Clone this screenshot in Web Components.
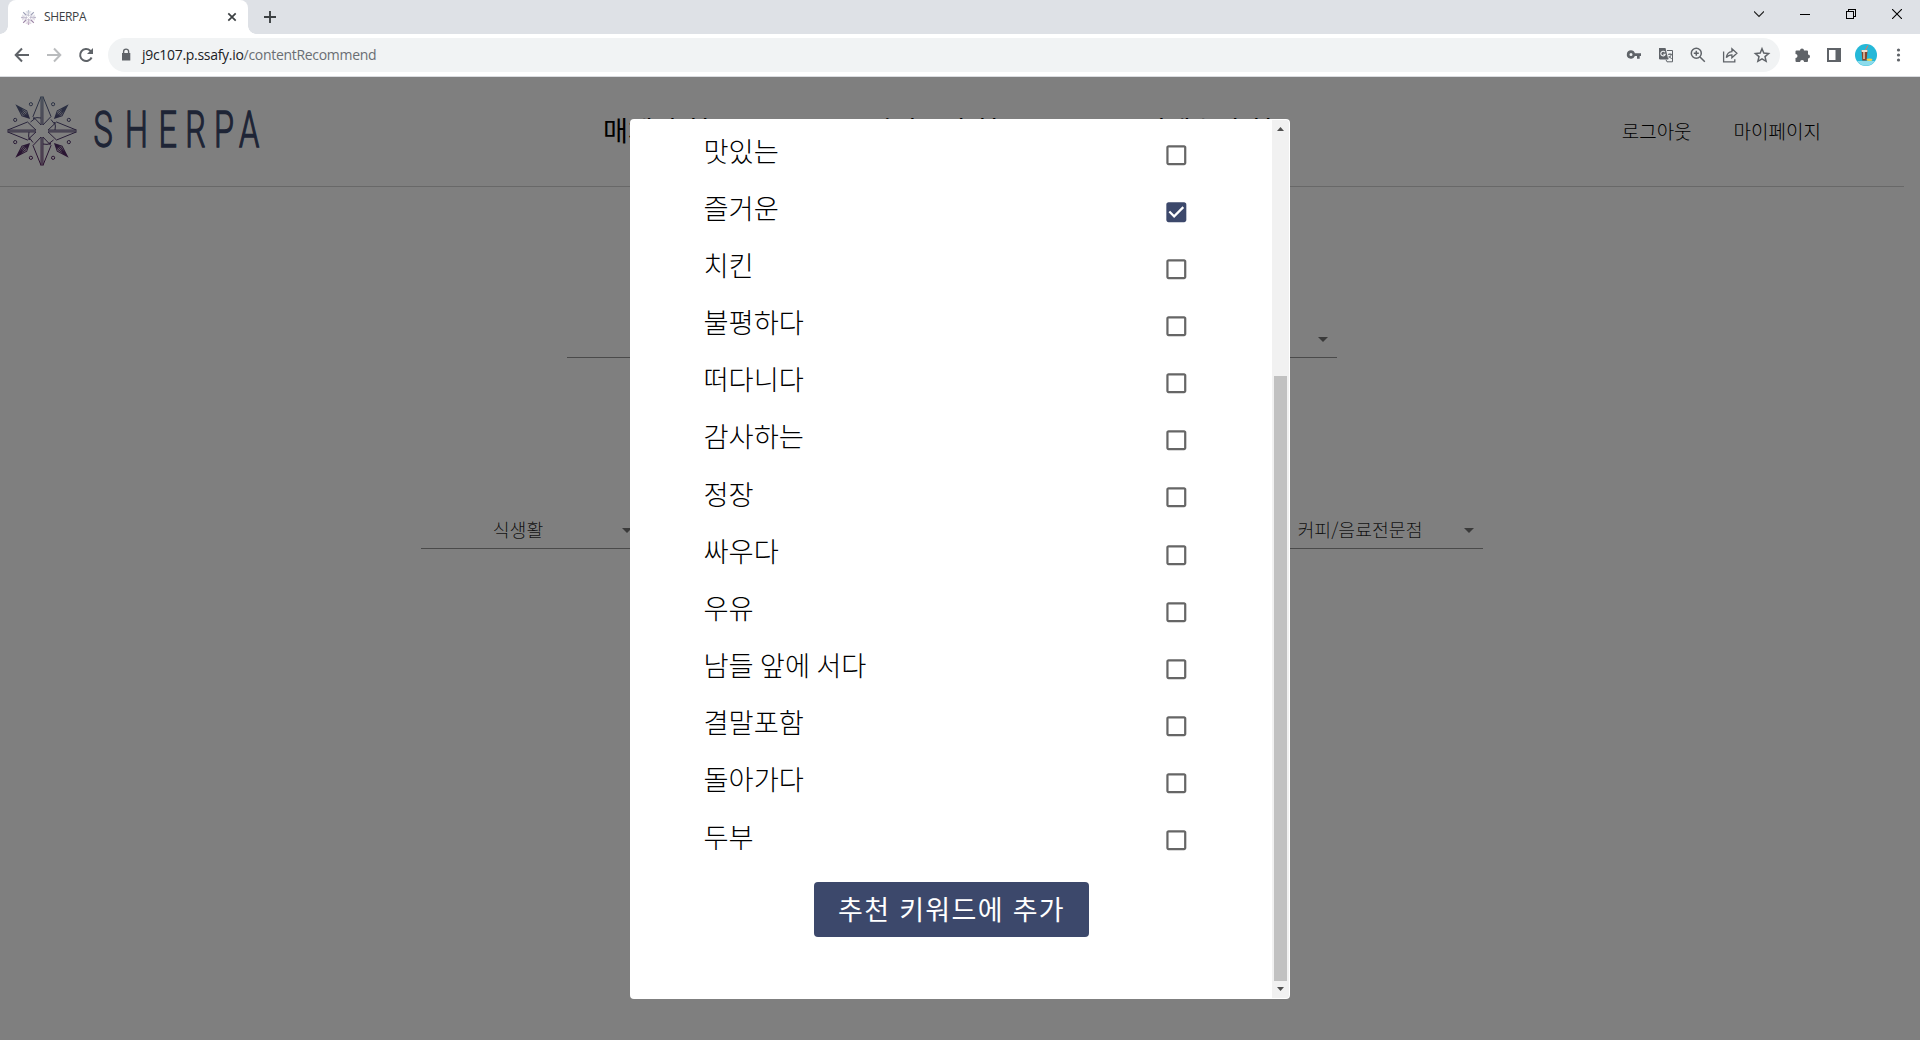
<!DOCTYPE html>
<html lang="ko">
<head>
<meta charset="utf-8">
<title>SHERPA</title>
<style>
html,body{margin:0;height:100%;overflow:hidden;background:#fff}
body{font-family:"Noto Sans CJK KR","Noto Sans",sans-serif;font-weight:300;color:#000}
</style>
</head>
<body>
<browser-window></browser-window>
<script>
const define = (name, html, setup) => {
  const t = document.createElement('template');
  t.innerHTML = html;
  customElements.define(name, class extends HTMLElement {
    constructor() {
      super();
      this.attachShadow({mode: 'open'}).appendChild(t.content.cloneNode(true));
    }
    connectedCallback() { if (setup) setup(this, this.shadowRoot); }
  });
};

/* Compass star: four blades, four diagonal seeds, eight dots */
const blade = a => `<g transform="rotate(${a})"><path d="M-.9-34.5-9-14.5-.9-6ZM.9-34.5 9-14.5.9-6Z"/></g>`;
const seed = a => `<g transform="rotate(${a})"><path d="M0-36 3.4-25 0-18-3.4-25ZM0-36V-18M0-34-1.700-25 0-19 1.700-25Z"/></g>`;
const dots = [22.5,67.5,112.5,157.5,202.5,247.5,292.5,337.5].map(a => {
  const r = a * Math.PI / 180;
  return `<circle cx="${(29*Math.cos(r)).toFixed(1)}" cy="${(29*Math.sin(r)).toFixed(1)}" r="1.6"/>`;
}).join('');
define('star-mark', `<style>:host{display:block}svg{display:block;width:100%;height:100%}</style>
<svg viewBox="-36 -36 72 72"><defs><linearGradient id="g" gradientUnits="userSpaceOnUse" x1="0" y1="-36" x2="0" y2="36"><stop offset="0" stop-color="#5a7090"/><stop offset=".5" stop-color="#4e3f70"/><stop offset="1" stop-color="#571b5c"/></linearGradient></defs>
<mask id="m" maskUnits="userSpaceOnUse" x="-36" y="-36" width="72" height="72"><g fill="none" stroke="#fff" stroke-width="1">${[0,90,180,270].map(blade).join('')}${[45,135,225,315].map(seed).join('')}${dots}<path d="M-9-12.500Q-5-14-1-13M12.500-9Q14-5 13-1M9 12.500Q5 14 1 13M-12.500 9Q-14 5-13 1M-11.500-9-7-12.500M9-11.500 12.500-7M11.500 9 7 12.500M-9 11.500-12.500 7"/></g></mask>
<rect x="-36" y="-36" width="72" height="72" fill="url(#g)" mask="url(#m)"/></svg>`);

define('tab-strip', `<style>
:host{display:flex;height:34px;background:#dee1e6;align-items:stretch;font-family:"Open Sans",sans-serif;font-weight:400}
.tab{margin-left:8px;width:240px;box-sizing:border-box;background:#fff;border-radius:8px 8px 0 0;display:flex;align-items:center;padding:0 10px 0 13px;position:relative}
.tab:before,.tab:after{content:"";position:absolute;bottom:0;width:8px;height:8px}
.tab:before{left:-8px;background:radial-gradient(circle at 0 0,transparent 7.5px,#fff 8px)}
.tab:after{right:-8px;background:radial-gradient(circle at 100% 0,transparent 7.5px,#fff 8px)}
star-mark{width:15px;height:15px}
span{font-size:12px;letter-spacing:-.35px;color:#3c4043;margin-left:8px;flex:1;line-height:16px}
.plus{margin:10px 0 0 15px;width:14px;height:14px}
.win{margin-left:auto;display:flex;align-items:center;padding:0 18px 6px 0;gap:36px}
svg{display:block}
</style>
<div class="tab"><star-mark></star-mark><span>SHERPA</span><svg width="12" height="12" viewBox="0 0 12 12" stroke="#3c4043" stroke-width="1.7"><path d="m2.3 2.3 7.4 7.4m0-7.4-7.4 7.4"/></svg></div>
<svg class="plus" viewBox="0 0 14 14" stroke="#3c4043" stroke-width="1.9"><path d="M7 1v12M1 7h12"/></svg>
<div class="win">
<svg width="10" height="10" viewBox="0 0 10 10" fill="none" stroke="#222" stroke-width="1.200"><path d="m0 2.3 5 5 5-5"/></svg>
<svg width="10" height="10" viewBox="0 0 10 10" fill="none" stroke="#000" shape-rendering="crispEdges"><path d="M0 5.5h10"/></svg>
<svg width="10" height="10" viewBox="0 0 10 10" fill="none" stroke="#000" shape-rendering="crispEdges"><path d="M.5 2.5h7v7h-7zM2.5 2.5v-2h7v7h-2"/></svg>
<svg width="10" height="10" viewBox="0 0 10 10" fill="none" stroke="#000" stroke-width="1.1"><path d="m0 0 10 10M10 0 0 10"/></svg>
</div>`);

define('tool-bar', `<style>
:host{display:flex;height:43px;box-sizing:border-box;border-bottom:1px solid #dadce0;background:#fff;padding:4px 12px 4px 12px;align-items:center;font-family:"Open Sans",sans-serif;font-weight:400}
svg{display:block;width:20px;height:20px;flex:none}
.nav{display:flex;gap:12px;width:96px}
.field{flex:1;height:34px;border-radius:17px;background:#f1f3f4;display:flex;align-items:center;padding:0 8px 0 8px}
.url{font-size:14px;letter-spacing:-.3px;color:#202124;margin-left:6px;flex:1;line-height:20px}
.url i{font-style:normal;color:#6a6e73}
.acts{display:flex;gap:12px}
.ext{display:flex;gap:10px;align-items:center;margin-left:12px}
.ext .av{width:22px;height:22px;margin:0 1px}
.ext svg:nth-child(1){margin-right:2px}
</style>
<div class="nav">
<svg viewBox="0 0 20 20" fill="none" stroke="#5f6368" stroke-width="2"><path d="M17 10H4M10 3.5 3.7 10l6.3 6.5"/></svg>
<svg viewBox="0 0 20 20" fill="none" stroke="#babcbe" stroke-width="2"><path d="M3 10h13M10 3.5l6.3 6.5-6.3 6.5"/></svg>
<svg viewBox="0 0 20 20" fill="none" stroke="#5f6368" stroke-width="2"><path d="M15.6 12.5a6 6 0 1 1-1.3-6.8l1.5 1.6"/><path d="M17 3v6h-6z" fill="#5f6368" stroke="none"/></svg>
</div>
<div class="field">
<svg viewBox="0 0 20 20"><path d="M6 8h8.3v7.5H6z" fill="#5f6368"/><path d="M7.600 8.200V6.600a2.500 2.500 0 0 1 5 0v1.600" fill="none" stroke="#5f6368" stroke-width="1.4"/></svg>
<span class="url">j9c107.p.ssafy.io<i>/contentRecommend</i></span>
<div class="acts">
<svg viewBox="0 0 20 20"><path fill-rule="evenodd" fill="#5f6368" d="M7 5.300a4.200 4.200 0 1 0 3.900 5.800H13V13.800h2.700v-2.700H17V8.300h-6.100A4.200 4.200 0 0 0 7 5.300Zm0 2.800a1.500 1.500 0 1 1 0 3 1.500 1.500 0 0 1 0-3Z"/></svg>
<svg viewBox="0 0 20 20" fill="none" stroke="#5f6368"><path d="M3 3h6.500l2.800 11.500H4.200A1.200 1.200 0 0 1 3 13.300Z" fill="#5f6368" stroke="none"/><path d="M9 7.300A2.300 2.300 0 1 0 9.300 9.200H7.200" stroke="#f1f3f4" stroke-width="1.1"/><path d="M11 5.500h5.500v11.300H11l-1-2M12 9.300h4M14 8.300v1M15.300 9.300c-.5 2-1.500 3-3 4M12.700 11l3 3"/></svg>
<svg viewBox="0 0 20 20" fill="none" stroke="#5f6368" stroke-width="1.500"><circle cx="8.300" cy="8.300" r="5"/><path d="m12 12 4.800 4.800M5.800 8.300h5M8.300 5.800v5"/></svg>
<svg viewBox="0 0 20 20" fill="none" stroke="#5f6368" stroke-width="1.300"><path d="M3.600 6.500v10.300h11.200v-2.500M6.300 12.700c.5-4 2.700-5.700 5.600-6V3.800l5 4.500-5 4.400V9.900c-2.400 0-4.200.8-5.600 2.800Z"/></svg>
<svg viewBox="0 0 20 20" fill="none" stroke="#5f6368" stroke-width="1.500"><path d="m10 3.700 1.800 4.400 4.800.4-3.600 3.100 1.100 4.700-4.100-2.500-4.100 2.500L7 11.600 3.400 8.500l4.800-.4Z"/></svg>
</div></div>
<div class="ext">
<svg viewBox="0 0 20 20"><path fill="#5f6368" d="M4.500 5.500H8a2 2 0 1 1 4 0h3A1 1 0 0 1 16 6.500V9.500a2 2 0 1 1 0 4v2.500a1 1 0 0 1-1 1h-2.900a2 2 0 0 0-4 0H4.500a1 1 0 0 1-1-1v-3a2 2 0 0 0 0-4V6.500a1 1 0 0 1 1-1Z"/></svg>
<svg viewBox="0 0 20 20"><path d="M3 3h14v14H3Z" fill="#5f6368"/><path d="M5 5h6.500v10H5Z" fill="#fff"/></svg>
<svg class="av" viewBox="0 0 22 22"><circle cx="11" cy="11" r="11" fill="#25b8d8"/><path d="M2 17h18a11 11 0 0 1-18 0Z" fill="#8bdcec"/><path d="M6.500 6h6l-.8 10.500H7.300Z" fill="#85452d"/><path d="M6.500 6h6l-.2 2H6.700Z" fill="#f0dfd0"/><path d="M9 8v7" stroke="#e9cbb0" stroke-width="1.500"/><path d="m10.500 6 2.500-4.500" stroke="#ef6f55"/><ellipse cx="14.500" cy="15.800" rx="3" ry="1.200" fill="#f3d44b"/></svg>
<svg viewBox="0 0 20 20" fill="#5f6368"><circle cx="10.500" cy="5" r="1.600"/><circle cx="10.500" cy="10" r="1.600"/><circle cx="10.500" cy="15" r="1.600"/></svg>
</div>`);

define('site-header', `<style>
:host{display:flex;height:110px;width:1904px;box-sizing:border-box;border-bottom:1px solid #d0d0d0;align-items:center}
star-mark{width:72px;height:72px;margin:0 0 2px 6px;flex:none}
.word{width:190px;height:60px;flex:none;margin-left:10px;display:block}
nav{display:flex;margin:0 0 3px 325px;font-size:27.100px;font-weight:400;line-height:40px;white-space:nowrap;word-spacing:-.5px}
nav span:nth-child(1){width:264px}
nav span:nth-child(2){width:274px}
.user{display:flex;gap:42px;margin-left:auto;padding:0 83px 2px 0;font-size:19px;line-height:28px}
</style>
<star-mark></star-mark>
<svg class="word" viewBox="0 0 190 60"><text transform="translate(0 45.200) scale(.64 1)" x="8.500 58 110 152 197 236" font-family="Roboto" font-weight="300" font-size="50.600" fill="#3c486b" stroke="#3c486b" stroke-width="1.400">SHERPA</text></svg>
<nav><span>매체 추천</span><span>키워드 추천</span><span>컨텐츠 추천</span></nav>
<div class="user"><span>로그아웃</span><span>마이페이지</span></div>`);

define('select-field', `<style>
:host{display:flex;box-sizing:border-box;height:37px;border-bottom:1px solid #949494;align-items:center;color:rgba(0,0,0,.87);font-size:18.300px;line-height:26px}
span{flex:1;text-align:center;padding-bottom:2px}
svg{width:24px;height:24px;margin-right:2px;flex:none}
</style><span><slot></slot></span><svg viewBox="0 0 24 24"><path d="m7 10 5 5 5-5z" fill="#757575"/></svg>`);

define('key-row', `<style>
:host{display:flex;justify-content:space-between;align-items:center;height:57.170px;font-size:27.300px;line-height:40px;word-spacing:-1.500px}
span{padding-bottom:10.500px}
svg{width:26.670px;height:26.670px;display:block}
</style><span><slot></slot></span><svg viewBox="0 0 24 24"><path fill="#666"/></svg>`, (host, root) => {
  const p = root.querySelector('path');
  if (host.hasAttribute('checked')) {
    p.setAttribute('fill', '#3c486b');
    p.setAttribute('d', 'M19 3H5c-1.110 0-2 .9-2 2v14c0 1.100.89 2 2 2h14c1.110 0 2-.9 2-2V5c0-1.100-.89-2-2-2zm-9 14l-5-5 1.410-1.410L10 14.170l7.590-7.590L19 8l-9 9z');
  } else {
    p.setAttribute('d', 'M19 5v14H5V5h14m0-2H5c-1.100 0-2 .9-2 2v14c0 1.100.9 2 2 2h14c1.100 0 2-.9 2-2V5c0-1.100-.9-2-2-2z');
  }
});

define('scroll-rail', `<style>
:host{display:flex;flex-direction:column;align-items:center;width:17px;background:#f1f1f1;border-radius:0 3px 3px 0}
svg{width:17px;height:17px;flex:none}
i{width:13px;height:605px;background:#c1c1c1;margin-top:auto}
</style><svg viewBox="0 0 17 17" fill="#505050"><path d="M5 11h7L8.500 7Z"/></svg><i></i><svg viewBox="0 0 17 17" fill="#505050"><path d="M5 6h7L8.500 10Z"/></svg>`);

define('keyword-dialog', `<style>
:host{display:flex;width:660px;height:880px;box-sizing:border-box;padding:1px;background:#fff;border-radius:4px}
.body{flex:1;display:flex;flex-direction:column;padding:6.300px 0 0}
.list{padding:0 82px 0 72.500px}
button{align-self:center;margin:12.200px 1px 0 0;width:275px;height:55px;border:0;border-radius:4px;background:#3c486b;color:#fff;font:400 27px/40px "Noto Sans CJK KR",sans-serif;letter-spacing:1.300px;padding:0 0 1px 1px;white-space:nowrap}
</style>
<div class="body"><div class="list">
<key-row>맛있는</key-row><key-row checked>즐거운</key-row><key-row>치킨</key-row><key-row>불평하다</key-row><key-row>떠다니다</key-row><key-row>감사하는</key-row><key-row>정장</key-row><key-row>싸우다</key-row><key-row>우유</key-row><key-row>남들 앞에 서다</key-row><key-row>결말포함</key-row><key-row>돌아가다</key-row><key-row>두부</key-row>
</div><button>추천 키워드에 추가</button></div>
<scroll-rail></scroll-rail>`);

define('recommend-page', `<style>
:host{display:block}
.one{width:770px;margin:134px 0 0 567px}
.row{display:flex;justify-content:space-between;width:1062px;margin:154px 0 0 421px}
.row select-field{width:220px}
</style>
<site-header></site-header>
<select-field class="one"></select-field>
<div class="row"><select-field>식생활</select-field><select-field></select-field><select-field>커피/음료전문점</select-field></div>`);

define('browser-window', `<style>
:host{display:flex;flex-direction:column;height:1040px;width:1920px}
main{flex:1;position:relative;overflow:hidden}
.veil{position:absolute;inset:0;background:rgba(0,0,0,.5);display:flex;justify-content:center;align-items:flex-start;padding-top:42px}
</style><tab-strip></tab-strip><tool-bar></tool-bar>
<main><recommend-page></recommend-page><div class="veil"><keyword-dialog></keyword-dialog></div></main>`);
</script>
</body>
</html>
